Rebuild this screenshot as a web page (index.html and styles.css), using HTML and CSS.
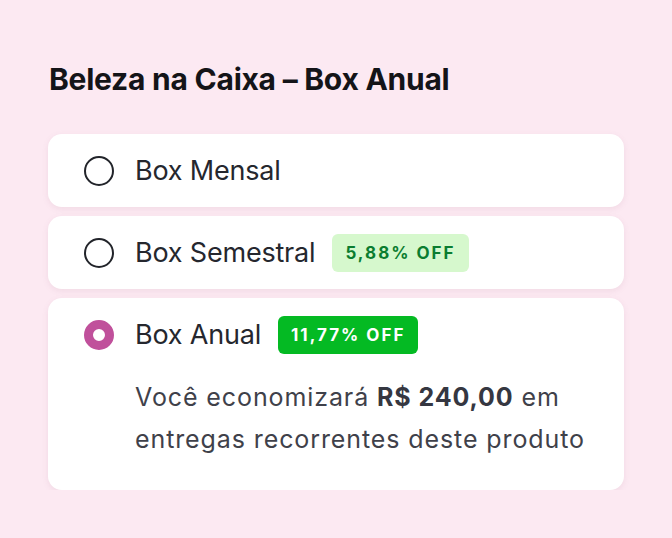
FILE: index.html
```html
<!DOCTYPE html>
<html lang="pt-BR">
<head>
<meta charset="utf-8">
<link rel="stylesheet" href="styles.css">
</head>
<body>
<main class="page">
  <h1 class="title">Beleza na Caixa – Box Anual</h1>
  <div class="options">
    <div class="card">
      <div class="row">
        <span class="radio"></span>
        <span class="label">Box Mensal</span>
      </div>
    </div>
    <div class="card">
      <div class="row">
        <span class="radio"></span>
        <span class="label">Box Semestral</span>
        <span class="badge badge-light">5,88% OFF</span>
      </div>
    </div>
    <div class="card card-selected">
      <div class="row">
        <span class="radio radio-checked"></span>
        <span class="label">Box Anual</span>
        <span class="badge badge-strong">11,77% OFF</span>
      </div>
      <p class="desc">Você economizará <strong>R$ 240,00</strong> em entregas recorrentes deste produto</p>
    </div>
  </div>
</main>
</body>
</html>
```

FILE: styles.css
```css
html, body {
  margin: 0;
  padding: 0;
  background: #fce9f2;
}
body {
  font-family: "Inter", "Liberation Sans", sans-serif;
  color: #25272e;
}
.page {
  padding: 61px 48px 0 48px;
}
.title {
  margin: 0 0 37px 1px;
  font-size: 30px;
  line-height: 36px;
  font-weight: 700;
  letter-spacing: -0.25px;
  color: #141418;
}
.options {
  display: flex;
  flex-direction: column;
  gap: 9px;
}
.card {
  background: #ffffff;
  border-radius: 14px;
  padding: 18px 36px;
  box-shadow: 0 2px 6px rgba(150, 90, 120, 0.10);
}
.card-selected {
  padding-bottom: 30px;
}
.row {
  display: flex;
  align-items: center;
  height: 37px;
}
.radio {
  box-sizing: border-box;
  width: 30px;
  height: 30px;
  border-radius: 50%;
  border: 2px solid #22242a;
  flex: none;
  margin-right: 21px;
}
.radio-checked {
  border: 9px solid #c0509b;
  background: #fff;
}
.label {
  font-size: 27px;
  font-weight: 400;
  letter-spacing: -0.2px;
  color: #25272e;
}
.badge {
  margin-left: 17px;
  height: 38px;
  display: inline-flex;
  align-items: center;
  padding: 0 13px;
  border-radius: 6px;
  font-size: 17px;
  font-weight: 700;
  letter-spacing: 2px;
}
.badge-light {
  background: #d6f8cd;
  color: #0b7d30;
}
.badge-strong {
  background: #04ba23;
  color: #ffffff;
}
.desc {
  margin: 23px 0 0 51px;
  font-size: 25px;
  line-height: 42px;
  letter-spacing: 0.9px;
  color: #3f414a;
  max-width: 470px;
}
.desc strong {
  font-weight: 700;
  color: #353741;
}
```
